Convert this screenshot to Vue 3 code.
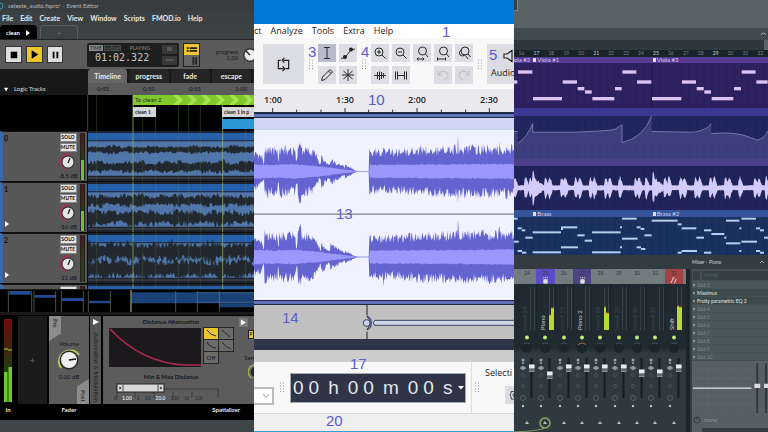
<script setup>
function rng(seed) {
  let s = seed
  return () => {
    s = (s * 16807) % 2147483647
    return s / 2147483647
  }
}

function envelope(points, x) {
  for (let i = 1; i < points.length; i++) {
    const [x0, a0] = points[i - 1]
    const [x1, a1] = points[i]
    if (x <= x1) return x1 === x0 ? a1 : a0 + ((a1 - a0) * (x - x0)) / (x1 - x0)
  }
  return points[points.length - 1][1]
}

function wave(seed, from, to, step, cy, ampAt, jitter) {
  const r = rng(seed)
  for (let i = 0; i < 5; i++) r()
  const up = []
  const down = []
  for (let x = from; x <= to; x += step) {
    const a = ampAt(x)
    up.push(`${x},${(cy - a * (1 - jitter + jitter * 1.4 * r())).toFixed(1)}`)
    down.unshift(`${x},${(cy + a * (1 - jitter + jitter * 1.4 * r())).toFixed(1)}`)
  }
  return `M${up.join('L')}L${down.join('L')}Z`
}

const leftMenu = ['File', 'Edit', 'Create', 'View', 'Window', 'Scripts', 'FMOD.io', 'Help']
const sheets = ['Timeline', 'progress', 'fade', 'escape']
const leftTimes = ['0:45', '0:50', '0:55', '1:00']

function fmodWaves(seed, a, b) {
  const bump = (x, k) => 0.85 + 0.25 * Math.sin(x / 13 + k) * Math.sin(x / 37 + k * 2)
  return [
    wave(seed, 264, 762, 3, 57, x => a * bump(x, seed % 7), 0.6),
    wave(seed + 91, 264, 762, 3, 110, x => b * bump(x, seed % 5), 0.6)
  ]
}
const tracks = [
  { name: '0', db: '-8.5 dB', level: 20, paths: fmodWaves(11, 12, 19), arrow: false },
  { name: '1', db: '-10 dB', level: 20, paths: fmodWaves(57, 20, 24), arrow: true },
  { name: '2', db: '-11 dB', level: 0, paths: fmodWaves(203, 31, 31), arrow: true },
  { name: '3', db: '', level: 0, paths: [], arrow: false }
]
const gridLines = [290, 428, 467, 535, 566, 601, 737]

const midMenu = ['ct', 'Analyze', 'Tools', 'Extra', 'Help']
const midTimes = ['1:00', '1:30', '2:00', '2:30']
const outer = [[6, 54], [30, 46], [34, 26], [37, 26], [38, 78], [60, 68], [76, 66], [78, 34], [80, 34], [82, 72], [130, 68], [132, 40], [136, 38], [138, 94], [146, 90], [150, 72], [185, 62], [202, 28], [206, 26], [208, 48], [230, 22], [234, 22], [236, 38], [275, 15], [278, 10], [280, 20], [312, 2], [318, 0.5], [351, 0.5], [352, 62], [440, 62], [520, 70], [786, 74]]
const inner = [[6, 22], [60, 20], [130, 22], [200, 16], [260, 8], [312, 1.5], [318, 1], [351, 1], [352, 20], [786, 23]]
const spikes = { 618: 100, 642: 98, 394: 80, 574: 84, 698: 84, 742: 84 }
const channels = [184, 441].map((cy, i) => ({
  outer: wave(77 + i * 400, 6, 786, 2, cy, x => spikes[x] || envelope(outer, x), 0.34),
  inner: wave(31 + i * 70, 6, 786, 3, cy, x => envelope(inner, x), 0.12)
}))
const timeGroups = [['0', '0'], ['h'], ['0', '0'], ['m'], ['0', '0'], ['s']]

const bars = Array.from({ length: 17 }, (_, i) => i + 16)
const viola = [[5, 17, 247], [17, 62, 217], [62, 151, 297], [151, 196, 247], [196, 218, 267], [218, 240, 277], [240, 308, 297], [308, 330, 267], [330, 374, 217], [374, 419, 247], [419, 509, 297], [509, 553, 247], [553, 576, 267], [576, 598, 277], [598, 665, 297], [665, 688, 267], [688, 732, 217], [732, 768, 247]]
const brass = [[5, 17, 251], [17, 29, 280], [29, 40, 286], [40, 62, 308], [5, 20, 320], [17, 30, 348], [30, 43, 353], [62, 147, 292], [62, 147, 352], [147, 196, 277], [147, 153, 282], [147, 198, 337], [196, 218, 301], [218, 240, 317], [240, 326, 292], [240, 326, 352], [324, 330, 277], [330, 374, 251], [330, 377, 311], [324, 330, 337], [374, 386, 277], [386, 397, 282], [374, 387, 337], [387, 400, 342], [397, 419, 301], [419, 497, 257], [497, 509, 268], [509, 553, 280], [553, 576, 308], [576, 598, 286], [598, 637, 297], [637, 643, 308], [497, 509, 353], [509, 555, 348], [576, 598, 353], [642, 682, 257], [642, 685, 325], [688, 732, 251], [688, 735, 320], [682, 688, 280], [682, 688, 348], [732, 744, 280], [744, 756, 286], [732, 744, 348], [744, 756, 353], [756, 768, 308]]
const beats = Array.from({ length: 34 }, (_, i) => 17 + i * 22.4)

function loopAmp(x) {
  const burst = [8, 40, 54, 65, 100, 112, 148, 159, 190, 202, 234, 246, 280, 292, 323, 370, 381, 402, 425, 458, 470, 505, 516, 550, 561, 594, 606, 640, 651, 683, 728, 740, 762]
  let a = 8
  for (const b of burst) {
    const d = x - b
    if (b === 65 || b === 425) {
      if (d > -4 && d < 32) a = Math.max(a, 50 * (1 - d / 40) * (d > 2 ? 0.66 : 1))
    } else if (d > -4 && d < 10) {
      a = Math.max(a, 36 * (1 - Math.abs(d - 1) / 13))
    }
  }
  return a
}
const loop = wave(9, 6, 768, 2, 160, loopAmp, 0.25)

const strips = [
  { n: 24, name: 'Insert 24' },
  { n: 25, name: 'Piano', tone: 'violet', named: true, meter: [15, 22], low: 18 },
  { n: 26, name: 'Insert 26' },
  { n: 27, name: 'Piano 2', tone: 'plum', named: true, pan: true },
  { n: 28, name: 'Insert 28', meter: [23, 17] },
  { n: 29, name: 'Insert 29' },
  { n: 30, name: 'Insert 30', low: 14 },
  { n: 31, name: 'Insert 31', low: 14 },
  { n: 32, name: 'Shift', tone: 'red', named: true, meter: [24, 23] }
]
const slots = ['Slot 1', 'Maximus', 'Fruity parametric EQ 2', 'Slot 4', 'Slot 5', 'Slot 6', 'Slot 7', 'Slot 8', 'Slot 9', 'Slot 10']
</script>

<template>
  <main class="collage">
    <!-- Event editor -->
    <section class="pane fmod">
      <header class="f-title"><svg class="f-logo" viewBox="0 0 4 8"><path d="M0 1Q3 1 3 4T0 7" fill="none" stroke="#3f9ab8" /></svg>celeste_audio.fspro* - Event Editor</header>
      <nav class="f-menu"><button v-for="m in leftMenu" :key="m">{{ m }}</button></nav>
      <div class="f-files">
        <button class="f-file on">clean <svg viewBox="0 0 6 6"><path d="M1 0L5 3L1 6Z" fill="#fff" /></svg></button>
        <button class="f-file">+</button>
      </div>

      <div class="f-transport">
        <button class="key" aria-label="Stop"><svg viewBox="0 0 16 16"><path d="M5 5h7v7H5z" /></svg></button>
        <button class="key yellow" aria-label="Play"><svg viewBox="0 0 16 16"><path d="M5 3.500L12 8L5 12.500Z" /></svg></button>
        <button class="key pause" aria-label="Pause"><svg viewBox="0 0 16 16"><path d="M5 5h2v7H5zM9 5h2v7H9z" /></svg></button>
        <div class="display">
          <div class="readout">
            <div class="modes"><span class="chip">TIME</span><span class="chip dim">BEATS</span><span class="state">PLAYING</span></div>
            <output>01:02.322</output>
          </div>
          <div class="steppers">
            <button aria-label="Markers"><svg viewBox="0 0 15 8"><path d="M5 3h5M5 5h5" stroke="#777" /></svg></button>
            <button aria-label="Cursor"><svg viewBox="0 0 15 8"><path d="M4 4h7" stroke="#777" /></svg></button>
          </div>
        </div>
        <div class="views">
          <button class="yellow" aria-label="Tracks"><svg viewBox="0 0 16 11"><path d="M3 4h2M6 4h8M3 7h2M6 7h8" stroke="#222" stroke-width="2" /></svg></button>
          <button aria-label="Mixer"><svg viewBox="0 0 16 11"><path d="M10 2v8M13 2v8" stroke="#222" stroke-width="2" /></svg></button>
        </div>
        <div class="param">progress<br />1.30</div>
        <svg class="param-knob" viewBox="0 0 12 16"><circle cx="8" cy="8" r="7" fill="#353535" /><circle cx="8" cy="8" r="5.500" fill="#eee" /><path d="M8 8L4 4" stroke="#222" stroke-width="1.500" /></svg>
      </div>

      <div class="f-sheets">
        <button v-for="(s, i) in sheets" :key="s" :class="{ on: i === 0 }">{{ s }}</button>
      </div>
      <div class="f-ruler">
        <span class="logic"><svg viewBox="0 0 6 6"><path d="M0 1h5L2.500 5.500Z" fill="#fff" /></svg>Logic Tracks</span>
        <div class="f-times"><span v-for="t in leftTimes" :key="t">{{ t }}</span></div>
      </div>
      <div class="f-logic">
        <svg class="fill" viewBox="0 0 762 108" preserveAspectRatio="none">
          <path v-for="g in gridLines" :key="g" :d="`M${g} 0V108`" stroke="#22301a" stroke-width="3" />
          <path d="M263 0V108" stroke="#35502b" stroke-width="3" /><path d="M399 0V108M668 0V108" stroke="#75944f" stroke-width="3" />
        </svg>
        <div class="lane green">
          <svg class="fill" viewBox="0 0 121 10" preserveAspectRatio="none"><path v-for="i in 6" :key="i" :d="`M${i * 14 + 26} 0l5 5l-5 5h5l5 -5l-5 -5z`" fill="#a5e350" /></svg>
          <span>To clean 2</span>
        </div>
        <div class="lane marks"><span>clean 1</span><span class="long">clean 1 in p</span></div>
        <div class="lane region"><span></span></div>
      </div>

      <div class="f-tracks">
        <article v-for="t in tracks" :key="t.name" class="track" :class="{ partial: !t.db }">
          <div class="head">
            <div class="head-name"><b v-if="t.db">{{ t.name }}</b><svg v-if="t.arrow" viewBox="0 0 6 6"><path d="M1 0L5 3L1 6Z" fill="#fff" /></svg></div>
            <div class="head-keys">
              <template v-if="t.db">
                <button>SOLO</button><button>MUTE</button>
                <svg class="knob" viewBox="0 0 18 18"><path d="M6 16A8 8 0 0 1 11 1" fill="none" stroke="#a5324f" stroke-width="2" /><circle cx="9" cy="9" r="6.500" fill="#2a2a2a" /><circle cx="9" cy="9" r="5.500" fill="#e4e4e4" /><path d="M9 10L11 5" stroke="#222" stroke-width="1.300" /></svg>
                <span>{{ t.db }}</span>
              </template>
              <button v-else aria-label="Solo"></button>
            </div>
            <div class="head-meter"><i v-if="t.level"></i></div>
          </div>
          <svg class="track-wave" viewBox="264 0 498 153" preserveAspectRatio="none">
            <path d="M264 0H762V153H264Z" fill="#1e222b" /><path d="M264 6H762V28H264Z" fill="#2660ab" />
            <path d="M264 31H762V137H264Z" fill="#4f75a9" /><path d="M264 141H762V147H264Z" fill="#343a42" />
            <path v-for="p in t.paths" :key="p" :d="p" fill="#222830" />
            <path v-for="g in gridLines" :key="g" :d="`M${g} 0V153`" stroke="#7aa55a" stroke-opacity=".28" stroke-width="2" />
            <path d="M399 0V153M668 0V153" stroke="#91b25e" stroke-opacity=".75" stroke-width="3" />
          </svg>
        </article>
      </div>

      <svg class="overview" viewBox="0 0 762 78" preserveAspectRatio="none">
        <path d="M0 0H762V78H0Z" fill="#1a1a1a" /><path d="M0 3H762V69H0Z" fill="#000" />
        <path d="M28 6H92V17H28ZM104 18H168V26H104ZM185 27H250V36H185ZM267 35H331V43H267Z" fill="#214a8c" />
        <path d="M395 10H762V43H395Z" fill="#1b4277" /><path d="M658 43H762V55H658Z" fill="#1b4277" />
        <path d="M25 6V69M95 6V69M102 6V69M167 6V69M184 6V69M250 6V69M265 6V69M331 6V69M527 6V69M592 6V69M658 6V69" stroke="#6d8060" stroke-width="2" />
        <path d="M393 3V69" stroke="#b3cd81" stroke-width="3" /><path d="M592 11H762M592 40H762" stroke="#4f7392" stroke-width="2" fill="none" />
      </svg>

      <div class="deck">
        <div class="unit in">
          <div class="in-box"><svg viewBox="0 0 8 83"><defs><linearGradient id="inl" x2="0" y2="1"><stop offset="0" stop-color="#720c0e" /><stop offset=".3" stop-color="#48200c" /><stop offset=".6" stop-color="#243d10" /></linearGradient></defs><path d="M0 0H8V83H0Z" fill="url(#inl)" /><path d="M0 53H3.500V83H0ZM4.500 48H8V83H4.500Z" fill="#6ccc2c" /><path d="M0 30h4M4 31h4" stroke="#bfc92e" /></svg></div>
          <b>In</b>
        </div>
        <div class="unit add"><button aria-label="Add effect">+</button></div>
        <div class="unit fader">
          <div class="box fader-box">
            <span class="side pre">Pre</span>
            <div class="volume">Volume
              <svg viewBox="0 0 28 24"><path d="M6 20A11 11 0 1 1 24 7" fill="none" stroke="#b9c45a" stroke-width="2" /><circle cx="14" cy="12" r="9.500" fill="#292929" /><circle cx="14" cy="12" r="8" fill="#efefef" /><path d="M14 12L21 11" stroke="#111" stroke-width="1.500" /></svg>
              0.00 dB</div>
            <span class="side post">Post</span>
          </div>
          <b>Fader</b>
        </div>
        <div class="unit auto"><div class="box auto-box"><svg viewBox="0 0 6 6"><path d="M0 0L6 3L0 6Z" fill="#fff" /></svg><span>Automation &amp; Modulation</span></div></div>
        <div class="unit spat">
          <div class="box spat-box">
            <div class="spat-main">
              <span class="cap">Distance Attenuation</span>
              <div class="curve-row">
                <svg class="curve" viewBox="0 0 85 39" preserveAspectRatio="none"><path d="M0 0H85V39H0Z" fill="#1b191b" /><path d="M1 1C18 21 43 37 73 37H85" fill="none" stroke="#a62a51" stroke-width="1.500" /></svg>
                <div class="shapes">
                  <button class="yellow" aria-label="Linear squared"><svg viewBox="0 0 14 11"><path d="M3 2Q6 7 12 8" /></svg></button>
                  <button aria-label="Linear"><svg viewBox="0 0 14 11"><path d="M3 2L11 9" /></svg></button>
                  <button aria-label="Inverse"><svg viewBox="0 0 14 11"><path d="M3 2Q5 7 12 8" /></svg></button>
                  <button aria-label="Inverse tapered"><svg viewBox="0 0 14 11"><path d="M3 2Q6 7 12 9" /></svg></button>
                  <button>Off</button>
                </div>
              </div>
              <span class="cap">Min &amp; Max Distance</span>
              <svg class="range" viewBox="0 0 110 15"><path d="M5 5V15M23 9V15M42 9V15M61 9V15M80 9V15M106 6V15M52 6H106" fill="none" stroke="#3a3a3a" /><rect x="5" y="1" width="47" height="8" fill="#d8d8d8" stroke="#222" /><path d="M11 1V9M46 1V9" stroke="#555" /><path d="M7.500 3.500L9.500 5L7.500 6.500ZM49.500 3.500L47.500 5L49.500 6.500Z" fill="#111" /></svg>
              <div class="marks-row"><span>0</span><em>1.00</em><span>1</span><span>10</span><em>20.0</em><span>100</span><span>1k</span><span>10k</span></div>
            </div>
            <div class="spat-edge">
              <button class="go" aria-label="Expand"><svg viewBox="0 0 8 8"><path d="M1 0.500L7 4L1 7.500Z" fill="#fff" /></svg></button>
              <button class="yellow edge-key" aria-label="Preview">P</button>
              <span>Sen</span>
              <svg class="edge-knob" viewBox="0 0 6 16"><path d="M6 1A7 7 0 0 0 4 14" fill="none" stroke="#a3ad55" stroke-width="1.500" /><circle cx="8" cy="8" r="5" fill="#242424" /></svg>
            </div>
          </div>
          <b>Spatializer</b>
        </div>
      </div>
      <div class="f-foot"></div>
    </section>

    <!-- Waveform editor -->
    <section class="pane aud">
      <div class="a-title"></div>
      <nav class="a-menu"><button v-for="m in midMenu" :key="m">{{ m }}</button></nav>
      <div class="a-tools">
        <button class="loop" aria-label="Loop"><svg viewBox="0 0 16 16"><path d="M5 3.500H2.500V12.500H8M10.500 12.500H13.500V3.500H8M9 1L6.500 3.500L9 6M7 10L9.500 12.500L7 15" fill="none" stroke="#222" stroke-width="1.300" /></svg></button>
        <svg class="dots" viewBox="0 0 6 10"><path d="M1 1h1M4 1h1M1 4h1M4 4h1M1 7h1M4 7h1M1 9.500h1M4 9.500h1" stroke="#999" /></svg>
        <div class="keys two">
          <button class="on" aria-label="Selection"><svg viewBox="0 0 18 18"><path d="M6 3.500H12M6 14.500H12M9 3.500V14.500" /></svg></button>
          <button aria-label="Envelope"><svg viewBox="0 0 18 18"><path d="M2 14.500L6 13.500L12 6L16 5" /><circle cx="6" cy="13" r="2" fill="#222" stroke="none" /><circle cx="12" cy="5.500" r="2" fill="#222" stroke="none" /></svg></button>
          <button aria-label="Draw"><svg viewBox="0 0 18 18"><path d="M3.500 14.500L4.500 11L12 3.500L14.500 6L7 13.500ZM10.500 5L13 7.500" /></svg></button>
          <button aria-label="Multi-tool"><svg viewBox="0 0 18 18"><path d="M9 3V15M3 9H15M4.500 5L13.500 13M13.500 5L4.500 13" /></svg></button>
        </div>
        <svg class="dots" viewBox="0 0 6 10"><path d="M1 1h1M4 1h1M1 4h1M4 4h1M1 7h1M4 7h1M1 9.500h1M4 9.500h1" stroke="#999" /></svg>
        <div class="keys five">
          <button aria-label="Zoom in"><svg viewBox="0 0 18 18"><circle cx="8" cy="8" r="4" /><path d="M11 11L14.500 14.500M6 8H10M8 6V10" /></svg></button>
          <button aria-label="Zoom out"><svg viewBox="0 0 18 18"><circle cx="8" cy="8" r="4" /><path d="M11 11L14.500 14.500M6 8H10" /></svg></button>
          <button aria-label="Fit selection"><svg viewBox="0 0 18 18"><circle cx="9.500" cy="7" r="4" /><path d="M12.500 10L15 13M4 15H11M5.500 13.500L4 15L5.500 16.500M9.500 13.500L11 15L9.500 16.500" /></svg></button>
          <button aria-label="Fit project"><svg viewBox="0 0 18 18"><circle cx="9.500" cy="7" r="4" /><path d="M12.500 10L15 13M3.500 15H11.500M3.500 13.500V16.500M11.500 13.500V16.500" /></svg></button>
          <button aria-label="Zoom toggle"><svg viewBox="0 0 18 18"><circle cx="10" cy="7" r="4" /><path d="M6.500 5.500Q3 8 5 11Q7.500 13 10 11M10.500 11.500L13 15M13 10L15.500 13" /></svg></button>
          <button aria-label="Trim"><svg viewBox="0 0 18 18"><path d="M3 9.500H15M6.500 6V13M8.500 5.500V14M10.500 6V13M12.500 7V12" /></svg></button>
          <button aria-label="Silence"><svg viewBox="0 0 18 18"><path d="M3.500 5.500V13.500M5.500 5.500V13.500M12.500 5.500V13.500M14.500 5.500V13.500M6 9.500H12" /></svg></button>
          <i></i>
          <button class="faded" aria-label="Undo"><svg viewBox="0 0 18 18"><path d="M4 5V9H8M4.500 9Q6 5 10 5Q14 6 14 9.500Q14 13 10 14" /></svg></button>
          <button class="faded" aria-label="Redo"><svg viewBox="0 0 18 18"><path d="M14 5V9H10M13.500 9Q12 5 8 5Q4 6 4 9.500Q4 13 8 14" /></svg></button>
        </div>
        <svg class="dots" viewBox="0 0 6 10"><path d="M1 1h1M4 1h1M1 4h1M4 4h1M1 7h1M4 7h1M1 9.500h1M4 9.500h1" stroke="#999" /></svg>
        <button class="audio"><svg viewBox="0 0 14 14"><path d="M1 5H4L9 1.500V12.500L4 9H1ZM12 6V8" fill="none" stroke="#222" stroke-width="1.200" /></svg><span>Audio</span></button>
      </div>
      <div class="a-ruler">
        <div class="a-times"><span v-for="t in midTimes" :key="t">{{ t }}</span></div>
        <svg viewBox="6 0 780 12" preserveAspectRatio="none"><path d="M62 0V12M279 0V12M495 0V12M712 0V12M134 5V12M207 5V12M350 5V12M422 5V12M568 5V12M641 5V12" stroke="#333" stroke-width="3" /></svg>
      </div>
      <div class="a-edge"></div>
      <div class="a-clip"></div>
      <svg class="a-wave" viewBox="6 60 780 510" preserveAspectRatio="none">
        <path d="M6 60H786V570H6Z" fill="#f0f2ff" />
        <g v-for="(c, i) in channels" :key="i"><path :d="c.outer" fill="#6464d0" /><path :d="c.inner" fill="#9a98fc" /></g>
        <path d="M6 312.500H786" stroke="#808085" stroke-width="4" />
      </svg>
      <div class="a-edge low"></div>
      <svg class="a-play" viewBox="6 0 780 102" preserveAspectRatio="none">
        <path d="M6 0H786V102H6Z" fill="#c0c0c0" />
        <path d="M345 0V32M345 80V102" stroke="#222" stroke-width="3" />
        <path d="M786 46H368L364 53L368 61H786" fill="#ced3e6" stroke="#3c4567" stroke-width="3" />
        <path d="M345 34Q358 36 358 54T345 74Q353 64 353 54T345 34" fill="#8186a2" stroke="#333b59" stroke-width="3" />
        <circle cx="344" cy="54" r="10" fill="#d0d3f0" stroke="#3c4567" stroke-width="3" />
      </svg>
      <div class="a-dark"></div>
      <div class="a-gap"></div>
      <div class="a-bottom">
        <button class="combo" aria-label="Rate"><svg viewBox="0 0 8 6"><path d="M1 1L4 4.500L7 1" fill="none" stroke="#999" /></svg></button>
        <svg class="dots" viewBox="0 0 6 10"><path d="M1 1h1M4 1h1M1 4h1M4 4h1M1 7h1M4 7h1M1 9.500h1M4 9.500h1" stroke="#999" /></svg>
        <div class="clock">
          <span v-for="(g, i) in timeGroups" :key="i"><i v-for="(c, j) in g" :key="j">{{ c }}</i></span>
          <svg viewBox="0 0 6 4"><path d="M0 0H6L3 3.500Z" fill="#fff" /></svg>
        </div>
        <div class="sel">
          <svg class="dots" viewBox="0 0 6 10"><path d="M1 1h1M4 1h1M1 4h1M4 4h1M1 7h1M4 7h1M1 9.500h1M4 9.500h1" stroke="#999" /></svg>
          <div class="sel-col"><span>Selecti</span><button aria-label="Options"><svg viewBox="0 0 12 12"><path d="M6 1L7.500 2.500L10 2.500V5L11.500 6L10 7.500V10H7.500L6 11.500L4.500 10H2V7.500L1 6L2 4.500V2.500H4.500Z" fill="none" stroke="#444" /><circle cx="6" cy="6" r="2" fill="none" stroke="#444" /></svg></button></div>
        </div>
      </div>
      <div class="a-status"></div>

      <b class="note n1">1</b><b class="note n3">3</b><b class="note n4">4</b><b class="note n5">5</b>
      <b class="note n10">10</b><b class="note n13">13</b><b class="note n14">14</b><b class="note n17">17</b><b class="note n20">20</b>
    </section>

    <!-- Playlist and mixer -->
    <section class="pane fl">
      <div class="l-top"><i></i></div>
      <div class="l-bar"><svg viewBox="0 0 8 6"><path d="M1 3.500L3.500 2L6 3.500" fill="none" stroke="#aab" /></svg></div>
      <div class="l-bar2"><i></i></div>
      <div class="l-bars"><span v-for="b in bars" :key="b" :class="{ strong: b % 4 === 1 }">{{ b }}</span></div>
      <div class="l-clips violet"><span>ola #2</span><span><i></i>Viola #1</span><span><i></i>Viola #3</span></div>
      <svg class="l-viola" viewBox="6 190 762 135" preserveAspectRatio="none">
        <path d="M6 190H768V325H6Z" fill="#2d2160" />
        <path v-for="b in beats" :key="b" :d="`M${b} 190V325`" stroke="#281d5a" stroke-width="2" /><path d="M419 190V325" stroke="#1e184c" stroke-width="4" />
        <path v-for="(n, i) in viola" :key="i" :d="`M${n[0] + 1} ${n[2]}H${n[1] - 1}`" stroke="#dcc4f4" stroke-width="10" />
      </svg>
      <div class="l-strip blue"></div>
      <svg class="l-auto" viewBox="6 347 762 130" preserveAspectRatio="none">
        <path d="M6 347H768V477H6Z" fill="#20275f" />
        <path v-for="b in beats" :key="b" :d="`M${b} 347V477`" stroke="#1d2359" stroke-width="2" />
        <path d="M6 394H17V430Q45 412 62 370V396H180Q280 393 308 388Q322 378 330 374V428Q395 412 419 347V394L545 396Q585 390 598 370V400Q660 396 690 404Q712 410 735 420Q757 416 768 392V477H6Z" fill="#3d3f7c" />
        <path v-for="b in beats" :key="'v' + b" :d="`M${b} 432V477`" stroke="#393a75" stroke-width="2" />
        <path d="M6 394H17M17 430Q45 412 62 370V396H180Q280 393 308 388Q322 378 330 374V428Q395 412 419 347M419 394L545 396Q585 390 598 370M598 400Q660 396 690 404Q712 410 735 420Q757 416 768 392" fill="none" stroke="#7377ac" stroke-width="3" />
      </svg>
      <div class="l-strip plum"></div>
      <svg class="l-loop" viewBox="6 93 762 135" preserveAspectRatio="none">
        <path d="M6 93H768V228H6Z" fill="#20245b" />
        <path v-for="b in beats" :key="b" :d="`M${b} 93V228`" stroke="#1d2155" stroke-width="2" />
        <path :d="loop" fill="#d3cbfb" />
      </svg>
      <div class="l-clips azure"><span></span><span><i></i>Brass</span><span><i></i>Brass #2</span></div>
      <svg class="l-brass" viewBox="6 246 762 114" preserveAspectRatio="none">
        <path d="M6 246H768V360H6Z" fill="#1b3160" />
        <path v-for="b in beats" :key="b" :d="`M${b} 246V360`" stroke="#182c59" stroke-width="2" />
        <path v-for="(n, i) in brass" :key="i" :d="`M${n[0]} ${n[2]}H${n[1]}`" stroke="#b5d0ee" stroke-width="6" />
      </svg>

      <div class="mixer">
        <div class="strips-side">
          <div class="strips-cap"></div>
          <div class="strips">
            <div v-for="s in strips" :key="s.n" class="strip">
              <div class="strip-top" :class="s.tone"><span>{{ s.n }}</span>
                <svg v-if="s.tone" viewBox="0 0 10 8"><path v-if="s.tone === 'red'" d="M2 7L5 1M6 7L8 2M4 1H6" fill="none" stroke="#eee" /><path v-else d="M3 0V1.500M5 0V1.500M7 0V1.500M3 3H7V7H3Z" fill="#ddd" stroke="#ddd" /></svg>
              </div>
              <div class="strip-meter">
                <span :class="{ named: s.named }">{{ s.name }}</span>
                <svg viewBox="0 0 5 43"><path d="M0 0H5V43H0Z" fill="#38434a" /><path d="M1 0H4V43H1Z" fill="#222b31" />
                  <g v-if="s.meter"><path :d="`M0 ${43 - s.meter[0]}H2V43H0ZM2 ${43 - s.meter[1]}H5V43H2Z`" fill="#b8da32" /><path :d="`M0 ${43 - s.meter[0]}h2M2 ${43 - s.meter[1]}h3`" stroke="#bb6a28" /></g></svg>
              </div>
              <svg class="strip-body" viewBox="0 0 18 102">
                <circle cx="9" cy="7.500" r="2" fill="#bdf06c" />
                <circle cx="9" cy="18" r="5" fill="#1c242b" /><path :d="s.pan ? 'M5 15A5 5 0 0 1 13 15' : 'M6 14A5 5 0 0 1 12 14'" fill="none" :stroke="s.pan ? '#b06a50' : '#465059'" />
                <path d="M13.500 28V68" stroke="#161d23" stroke-width="2" />
                <circle cx="5" cy="30" r="1.500" fill="#9aa4aa" /><circle cx="5" cy="33" r="1" fill="#9aa4aa" />
                <path d="M5 36L2 38L5 40M5 36L8 38L5 40" fill="#8d979d" stroke="#aab3b8" stroke-width=".5" /><circle cx="5" cy="45" r="1.500" fill="none" stroke="#46525a" />
                <g :transform="`translate(0 ${s.low ? (s.low - 4) / 2 : 0})`"><path d="M11 34H16.500V42H11Z" fill="#8b9499" /><path d="M11 35H16.500V38H11Z" fill="#e8ecee" /><path d="M11 40H16.500" stroke="#343e44" /></g>
                <path d="M3 56L5 54L7 56L5 58Z" fill="none" stroke="#47535b" /><circle cx="5" cy="68" r="2.500" fill="none" stroke="#56625f" /><circle cx="5" cy="76" r="1.200" fill="#b8c0c5" />
                <path d="M7 94L9 91L11 94Z" fill="#b5bdc2" />
                <g v-if="s.n === 25" fill="none"><circle cx="9" cy="93" r="5" stroke="#8fae72" stroke-width="1.500" /><path d="M9 98Q3 101 -22 102" stroke="#7c9a66" /></g>
              </svg>
            </div>
          </div>
        </div>
        <div class="rack">
          <header>Mixer - Piano<svg viewBox="0 0 6 4"><path d="M1 3L3 1L5 3" fill="none" stroke="#aab" /></svg></header>
          <div class="rack-in"><i></i><span>(none)</span></div>
          <div class="slots"><div v-for="(s, i) in slots" :key="s" :class="{ lit: i === 1 || i === 2 }"><i></i>{{ s }}</div></div>
          <svg class="eq" viewBox="0 0 78 48" preserveAspectRatio="none"><path d="M0 0H78V48H0Z" fill="#566064" /><path d="M0 8H62M0 16H62M0 32H62M0 40H62M16 2V46M32 2V46M47 2V46" stroke="#5b6568" /><path d="M1 25H61" stroke="#e3e8e8" /><path d="M67 2V48M76 2V48" stroke="#2f393d" stroke-width="2" /><path d="M64 21H70V25H64ZM74 21H78V25H74Z" fill="#d9dddd" /></svg>
          <div class="rack-out"><svg viewBox="0 0 8 8"><circle cx="4" cy="4" r="3" fill="none" stroke="#303a3d" /><path d="M4 1V4" stroke="#303a3d" /></svg><span>(none)</span></div>
          <div class="rack-foot"><i></i></div>
        </div>
      </div>
    </section>
  </main>
</template>

<style>
body { margin: 0; background: #111; }
</style>

<style scoped>
* { box-sizing: border-box; }
button { border: 0; margin: 0; padding: 0; background: none; color: inherit; font: inherit; display: flex; align-items: center; justify-content: center; white-space: nowrap; }
svg { display: block; flex: none; }
i, em { font-style: normal; }
.collage { display: grid; grid-template-columns: 254fr 260fr 254fr; min-height: 100vh; overflow: hidden; }
.pane { display: flex; flex-direction: column; min-width: 0; overflow: hidden; position: relative; white-space: nowrap; }
.fill { position: absolute; inset: 0; width: 100%; height: 100%; }
.yellow { background: #edc62f !important; }

/* Event editor */
.fmod { background: #3d4344; color: #e8e8e8; font-family: Lato, "Open Sans", sans-serif; font-size: 7px; line-height: 8px; }
.f-title { height: 11px; background: #383c3e; display: flex; align-items: center; gap: 4px; color: #b8bcbd; padding-top: 1px; font-size: 6px; }
.f-logo { width: 4px; height: 8px; }
.f-menu { height: 14px; background: #3b4042; display: flex; align-items: center; gap: 7px; padding-left: 2px; font-weight: 700; }
.f-files { height: 14px; background: #3d4244; display: flex; gap: 3px; }
.f-file { width: 38px; border-radius: 4px 4px 0 0; border: 1px solid #565b5c; border-bottom: 0; color: #777; }
.f-file.on { width: 37px; background: #000; border-color: #000; color: #fff; font-weight: 700; gap: 5px; font-size: 6px; }
.f-file svg { width: 6px; height: 6px; }
.f-transport { height: 30px; background: #5b5b5b; border-top: 1px solid #222; display: flex; align-items: center; gap: 4px; padding-left: 5px; }
.key { width: 17px; height: 17px; background: #dedede; border: 1px solid #333; }
.key.pause { width: 16px; }
.key svg { width: 15px; height: 15px; }
.display { width: 92px; height: 24px; margin-left: 20px; background: #1d1e1e; border-radius: 2px; display: flex; justify-content: space-between; padding: 2px; }
.readout { display: flex; flex-direction: column; }
.modes { display: flex; align-items: center; gap: 1px; font-size: 5px; line-height: 6px; }
.chip { background: #8d8d8d; color: #222; padding: 0 1px; }
.chip.dim { background: #4a4a4a; color: #111; }
.state { color: #8b8b8b; margin-left: 8px; }
output { font-family: "DejaVu Sans Mono", monospace; font-size: 10px; line-height: 14px; color: #c4c6c6; padding-left: 6px; }
.steppers { display: flex; flex-direction: column; gap: 2px; }
.steppers button { width: 15px; height: 9px; background: #383838; }
.steppers svg { width: 15px; height: 8px; }
.views { display: flex; flex-direction: column; border: 1px solid #222; }
.views button { width: 15px; height: 11px; background: #666; }
.views svg { width: 15px; height: 11px; }
.param { flex: 1; text-align: right; font-size: 6px; line-height: 6px; color: #1b1b1b; }
.param-knob { width: 12px; height: 16px; }
.f-sheets { height: 14px; background: #181818; display: flex; gap: 2px; padding-left: 88px; font-weight: 700; font-size: 7px; }
.f-sheets button { flex: 1; background: #252525; border-radius: 3px 3px 0 0; }
.f-sheets button.on { background: #666; }
.f-sheets::after { content: ""; width: 1px; background: #252525; }
.f-ruler { height: 12px; display: flex; background: #181818; font-size: 6px; }
.logic { width: 88px; display: flex; align-items: center; gap: 5px; padding-left: 4px; color: #ddd; }
.logic svg { width: 5px; height: 5px; }
.f-times { flex: 1; background: #5b5b5b; display: flex; color: #151515; align-items: center; padding-left: 9px; overflow: hidden; }
.f-times span { flex: 0 0 46px; }
.f-logic { position: relative; height: 36px; background: #000; display: grid; grid-template-rows: 10px 10px 10px; row-gap: 2px; padding-left: 133px; color: #222; font-size: 6px; overflow: hidden; }
.lane { position: relative; display: flex; align-items: center; }
.green { background: #7fc92c; }
.green span { position: relative; padding-left: 2px; }
.marks { justify-content: space-between; }
.marks span { width: 23px; height: 10px; line-height: 10px; background: #d6d6d6; padding-left: 2px; font-size: 5px; font-weight: 700; }
.marks .long { width: 32px; }
.region { justify-content: flex-end; }
.region span { width: 32px; height: 10px; background: #2b97d5; }
.f-tracks { display: flex; flex-direction: column; }
.track { height: 51px; display: flex; overflow: hidden; background: #0c0e10; }
.track.partial { height: 5px; }
.head { width: 87px; height: 50px; border-left: 3px solid #3a6aad; border-top: 1px solid #151515; background: #575757; display: flex; padding: 1px 2px 1px 0; gap: 2px; margin-right: 1px; color: #111; }
.head-name { flex: 1; display: flex; flex-direction: column; justify-content: space-between; padding: 1px 0 4px 1px; }
.head-name svg { width: 6px; height: 6px; }
.head-keys { width: 18px; display: flex; flex-direction: column; align-items: center; gap: 1px; font-size: 6px; line-height: 7px; }
.head-keys button { width: 17px; height: 9px; background: #e2e2e2; border: 1px solid #888; font-size: 5px; font-weight: 700; flex: none; }
.knob { width: 18px; height: 18px; }
.head-meter { width: 5px; background: linear-gradient(#5a1212, #4c2410 25%, #28400f 60%); display: flex; align-items: flex-end; margin-left: 1px; border: 1px solid #222; border-width: 0 1px; }
.head-meter i { height: 24px; background: #6fc233; border-top: 4px solid #1f3d10; flex: 1; }
.track-wave { flex: 1; min-width: 0; height: 50px; }
.overview { width: 100%; height: 26px; }
.deck { display: flex; gap: 2px; height: 105px; background: #000; padding-top: 1px; }
.unit { display: flex; flex-direction: column; align-items: center; }
.unit > b { line-height: 12px; font-size: 6px; }
.box { height: 88px; background: #5c5c5c; width: 100%; display: flex; }
.in { width: 16px; }
.in-box { height: 88px; padding-top: 3px; }
.in-box svg { width: 8px; height: 83px; }
.add { width: 29px; }
.add button { width: 29px; height: 88px; background: #1b1b1b; color: #666; font-size: 10px; }
.fader { width: 40px; }
.fader-box { position: relative; justify-content: center; align-items: center; color: #151515; }
.volume { display: flex; flex-direction: column; align-items: center; gap: 1px; font-size: 6px; line-height: 7px; }
.volume svg { width: 28px; height: 24px; }
.side { position: absolute; writing-mode: vertical-rl; width: 12px; height: 25px; line-height: 12px; font-size: 6px; background: #8c8c8c; color: #222; }
.pre { left: 0; top: 0; clip-path: polygon(0 0, 100% 0, 100% 70%, 0 100%); padding-top: 3px; }
.post { right: 0; bottom: 0; clip-path: polygon(0 30%, 100% 0, 100% 100%, 0 100%); text-align: right; padding-bottom: 2px; }
.auto { width: 11px; margin-left: -1px; }
.auto-box { flex-direction: column; align-items: center; gap: 8px; padding-top: 3px; background: #555; color: #1b1b1b; }
.auto-box svg { width: 6px; height: 6px; }
.auto-box span { writing-mode: vertical-rl; font-size: 6px; line-height: 8px; }
.spat { flex: 1; min-width: 0; overflow: hidden; }
.spat > b { align-self: flex-end; padding-right: 14px; }
.spat-box { padding: 2px 0 0 6px; color: #171717; font-size: 6px; line-height: 7px; }
.spat-main { flex: 1; display: flex; flex-direction: column; gap: 2px; }
.cap { text-align: center; font-weight: 700; line-height: 8px; }
.curve-row { display: flex; gap: 3px; height: 40px; margin-bottom: 3px; }
.curve { flex: 1; height: 39px; }
.shapes { display: grid; grid-template-columns: 14px 14px; grid-auto-rows: 11px; gap: 1px; align-content: start; }
.shapes button { background: #6b6b6b; outline: 1px solid #262626; }
.shapes svg { width: 14px; height: 11px; fill: none; stroke: #262626; }
.range { width: 110px; height: 15px; margin-left: 3px; }
.marks-row { display: flex; gap: 5px; padding-left: 5px; color: #2a2a2a; margin-top: -4px; font-size: 5px; line-height: 5px; }
.marks-row em { color: #fff; }
.spat-edge { width: 21px; display: flex; flex-direction: column; align-items: flex-end; gap: 3px; overflow: hidden; }
.go { width: 9px; height: 9px; background: #777; align-self: center; }
.go svg { width: 7px; height: 7px; }
.edge-key { width: 6px; height: 9px; border: 1px solid #222; margin-bottom: 12px; font-size: 5px; }
.edge-knob { width: 6px; height: 16px; }
.f-foot { flex: 1; background: #3f4647; min-height: 12px; }

/* Waveform editor */
.aud { background: #f8f8f9; color: #222; font-family: "Open Sans", "Noto Sans", sans-serif; font-size: 9px; line-height: 12px; }
.a-title { height: 24px; background: #0078d7; }
.a-menu { height: 14px; background: #fff; display: flex; gap: 9px; align-items: center; }
.a-tools { height: 51px; display: flex; align-items: flex-start; gap: 4px; padding: 6px 0 0 9px; overflow: hidden; }
.a-tools button { background: #dcdde3; }
.a-tools .loop { flex: none; width: 41px; height: 40px; }
.loop svg { width: 15px; height: 15px; }
.dots { width: 6px; height: 10px; }
.a-tools .dots { margin-top: 15px; }
.keys { display: grid; grid-auto-rows: 18px; column-gap: 3px; row-gap: 4px; flex: none; }
.two { grid-template-columns: 18px 18px; }
.five { grid-template-columns: repeat(5, 18px); }
.keys svg { width: 18px; height: 18px; fill: none; stroke: #2b2b2b; stroke-width: 1px; }
.a-tools .on { background: #b9bbcc; }
.keys .faded svg { stroke: #bcbcc0; }
.a-tools .audio { flex: 1; height: 40px; flex-direction: column; align-items: flex-start; gap: 4px; padding-left: 4px; overflow: hidden; }
.audio svg { width: 14px; height: 14px; margin-left: 12px; }
.a-ruler { height: 23px; background: #e9e9ee; display: flex; flex-direction: column; justify-content: space-between; padding-top: 5px; overflow: hidden; }
.a-ruler svg { width: 100%; height: 4px; }
.a-times { display: flex; margin-left: -17px; font-weight: 600; }
.a-times span { flex: 0 0 26%; text-align: center; }
.a-edge { height: 6px; background: #5f74b8; border: solid #20283f; border-width: 2px 0 1px; }
.a-edge.low { height: 5px; border-width: 1px 0; }
.a-clip { height: 12px; background: #cfd6f1; }
.a-wave { width: 100%; height: 170px; }
.a-play { width: 100%; height: 34px; }
.a-dark { height: 11px; background: #2f3448; }
.a-gap { height: 12px; background: #cdcdcd; }
.a-bottom { height: 51px; display: flex; gap: 5px; overflow: hidden; }
.combo { width: 20px; height: 18px; margin-top: 25px; border: 2px solid #bbb; border-left: 0; background: #fff; justify-content: flex-end; padding-right: 2px; flex: none; }
.combo svg { width: 8px; height: 6px; }
.a-bottom .dots { margin-top: 20px; }
.clock { width: 176px; height: 30px; flex: none; margin-top: 11px; background: #2f3448; border: 1px solid #aaa; color: #e6e6ea; font: 19px/28px "Liberation Sans", sans-serif; display: flex; align-items: center; gap: 9px; padding-left: 2px; }
.clock span { display: flex; gap: 5px; }
.clock svg { width: 6px; height: 4px; margin-left: -3px; }
.sel { flex: 1; border-left: 1px solid #ddd; display: flex; gap: 5px; padding-left: 2px; overflow: hidden; }
.sel-col { display: flex; flex-direction: column; padding-top: 5px; gap: 7px; }
.sel-col button { width: 20px; height: 18px; background: #dcdde3; margin-left: 20px; }
.sel-col svg { width: 12px; height: 12px; }
.a-status { flex: 1; min-height: 19px; background: #efeff0; border-top: 1px solid #d8d8d8; border-bottom: 1px solid #3e9bd0; }
.note { position: absolute; color: #5b5bd0; font: 15px/16px "Liberation Sans", sans-serif; }
.n1 { left: 188px; top: 24px; }
.n3 { left: 54px; top: 44px; }
.n4 { left: 107px; top: 44px; }
.n5 { left: 235px; top: 47px; }
.n10 { left: 114px; top: 92px; }
.n13 { left: 82px; top: 206px; }
.n14 { left: 28px; top: 310px; }
.n17 { left: 96px; top: 356px; }
.n20 { left: 72px; top: 413px; }

/* Playlist and mixer */
.fl { background: #2a343a; color: #c8cdd0; font-family: Lato, "Open Sans", sans-serif; font-size: 6px; line-height: 6px; }
.l-top { height: 28px; background: #586265; }
.l-top i { display: block; width: 4px; height: 11px; border: solid #7a8385; border-width: 0 1px 1px 0; background: #354047; }
.l-bar { height: 12px; background: #414b4f; display: flex; justify-content: flex-end; align-items: center; }
.l-bar svg { width: 8px; height: 6px; }
.l-bar2 { height: 10px; background: #2f393d; display: flex; justify-content: flex-end; }
.l-bar2 i { width: 4px; background: #5a6467; }
.l-bars { height: 7px; background: #18242b; display: flex; color: #758087; font-size: 5px; line-height: 7px; }
.l-bars span { flex: 1; text-align: center; }
.l-bars .strong { color: #c8d0d4; }
.l-clips { height: 6px; display: grid; grid-template-columns: 58fr 358fr 346fr; color: #d8ccec; }
.l-clips span { display: flex; gap: 1px; align-items: center; }
.l-clips i { width: 3px; height: 4px; background: #e4dcf4; }
.violet { background: #573c94; }
.azure { height: 7px; background: #34559c; }
.l-viola { width: 100%; height: 45px; }
.l-strip { height: 8px; background: #3a3795; }
.l-strip.plum { height: 7px; background: #4b4088; }
.l-auto { width: 100%; height: 43px; }
.l-loop { width: 100%; height: 44px; }
.l-brass { width: 100%; height: 38px; }
.mixer { flex: 1; display: grid; grid-template-columns: 176fr 78fr; min-height: 177px; }
.strips-side { display: flex; flex-direction: column; background: #27323a; min-width: 0; }
.strips-cap { height: 14px; background: #333d41; }
.strips { flex: 1; display: grid; grid-template-columns: repeat(9, 1fr); padding: 0 3px 0 4px; border-right: 4px solid #1c252a; background: linear-gradient(#737d80 15px, #202a31 15px 78px, #2e3940 84px); }
.strip { display: flex; flex-direction: column; min-width: 0; }
.strip-top { height: 15px; display: flex; flex-direction: column; align-items: center; color: #30393d; padding-top: 1px; gap: 1px; font-size: 5px; }
.strip-top svg { width: 9px; height: 7px; }
.strip-top.violet { background: #5c4bc6; }
.strip-top.plum { background: #4d4384; }
.strip-top.red { background: #a34343; }
.strip-meter { height: 46px; padding: 3px 1px 0 2px; display: flex; justify-content: space-between; color: #3d4850; border-left: 1px solid #1b242a; }
.strip-meter span { writing-mode: vertical-rl; transform: rotate(180deg); line-height: 7px; }
.strip-meter .named { color: #c5ccd0; }
.strip-meter svg { width: 5px; height: 43px; }
.strip-body { width: 18px; height: 102px; overflow: visible; }
.rack { background: #465155; display: flex; flex-direction: column; border-left: 2px solid #343e42; min-width: 0; font-size: 5px; }
.rack header { height: 14px; background: #333d41; display: flex; justify-content: space-between; align-items: center; padding-right: 3px; color: #ccd2d4; }
.rack header svg { width: 6px; height: 4px; }
.rack-in { height: 12px; display: flex; align-items: center; gap: 2px; color: #29343a; padding-left: 1px; }
.rack-in i { width: 7px; height: 9px; background: #364145; }
.rack-in span { flex: 1; height: 9px; line-height: 9px; background: #364145; padding-left: 2px; color: #566266; }
.slots { display: grid; grid-auto-rows: 7px; row-gap: 1px; padding-bottom: 1px; }
.slots div { background: #4b585b; display: flex; align-items: center; gap: 2px; padding-left: 1px; color: #7a878a; }
.slots .lit { color: #e2e8ea; background: #3b4b4c; }
.slots i { width: 2px; height: 2px; background: #aab4b6; border-radius: 1px; flex: none; }
.eq { width: 100%; height: 52px; }
.rack-out { height: 14px; background: #566064; display: flex; align-items: center; gap: 3px; color: #8a9497; padding-left: 1px; }
.rack-out svg { width: 8px; height: 8px; }
.rack-foot { flex: 1; background: #566064; padding: 1px 0 0 10px; }
.rack-foot i { display: block; height: 100%; background: #333d41; }
</style>
